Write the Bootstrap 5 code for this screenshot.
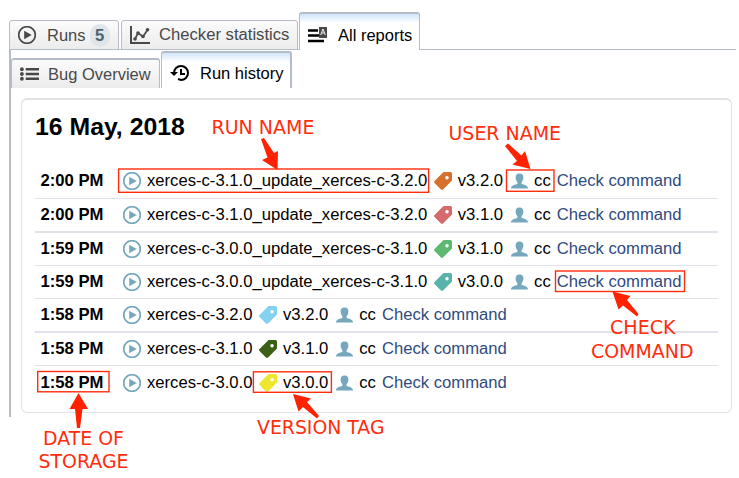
<!DOCTYPE html>
<html lang="en">
<head>
<meta charset="utf-8">
<meta name="viewport" content="width=device-width, initial-scale=1">
<title>Run history</title>
<link rel="stylesheet" href="https://cdn.jsdelivr.net/npm/bootstrap@5.3.0/dist/css/bootstrap.min.css">
<style>
body{font-family:"Liberation Sans",Arial,sans-serif;font-size:16.65px;line-height:20px;color:#000;background:#fff;width:739px;height:478px;overflow:hidden}
.shell{padding:12px 3px 0 9px}
.tabstrip{height:38px;flex-wrap:nowrap;white-space:nowrap;position:relative;border:0;font-size:16.5px}
.tabstrip.outer::before{content:"";position:absolute;left:0;right:0;bottom:0;height:1px;background:#b5bcc7}
.tabstrip .nav-link{position:relative;display:flex;align-items:center;padding:0;margin-bottom:0;color:#494949;border:1px solid #b5bcc7;border-radius:3px 3px 0 0;background:linear-gradient(#fbfbfb,#ececec)}
.tabstrip .nav-link.active{color:#000;border-color:#b5bcc7;border-top-width:2px;border-bottom:0;background:linear-gradient(#cfe5fa,#fff 9px)}
.outer .nav-link{height:30px}
.outer .nav-link.active{height:38px;padding-top:5px}
.inner .nav-link{height:30px;border-top-width:2px;border-bottom:0}
.inner .nav-link.active{height:37px;border-right-width:2px;padding-top:5px}
.tab-runs{width:110px}.tab-stats{width:177px;margin-left:2px}.tab-all{width:121px;margin-left:1px}
.tab-bugs{width:149px}.tab-history{width:131px;margin-left:1px}
.tabstrip svg{flex:none}
.tab-text{margin-left:10px}
.tab-bugs .tab-text{margin-left:9px}
.tab-stats .tab-text{margin-left:9px;font-size:16.65px}
.count{width:20px;height:23px;border-radius:10px;background:#dfe5e8;color:#4d6370;padding:0;font-size:16.65px;line-height:23px}
.pane{border-left:2px solid #b5bcc7;height:367px}
.panel{margin:10px 4px 0 10px;height:315px;border:1px solid #dfe2e7;border-top-width:2px;border-radius:6px;padding:12px 13px 0}
.day{font-size:24.8px;line-height:30px;font-weight:700;margin:0 0 22px}
.run{display:flex;align-items:center;height:33px;border-bottom:1px solid #dfe2e8;white-space:nowrap;padding-left:5.5px}
.run.tall{height:34px}
.run:first-child{height:35px;padding-bottom:1px}
.run.thick{border-bottom-width:2px}
.run:last-child{border:0}
.time{width:82.5px;font-weight:700}
.run a{color:#2f4b7e;text-decoration:none;margin-left:6px}
.ico{width:18px;height:18px;flex:none}
.play{color:#75a7bd;margin-right:6px}
.label-tag{margin:0 5.5px 0 7px}
.user{width:17px;color:#75a7bd;margin:0 6px 0 8px}
.notes{position:absolute;left:0;top:0;pointer-events:none}
.notes text{font-family:"DejaVu Sans",sans-serif;font-size:18.9px;fill:#ff2d0c}
</style>
</head>
<body>
<svg class="d-none">
<symbol id="play" viewBox="0 0 18 18"><circle cx="9" cy="9" r="8.3" fill="none" stroke="currentColor" stroke-width="1.7"/><path d="M6.2 4.8 13.7 9 6.2 13.2Z" fill="currentColor"/></symbol>
<symbol id="tag" viewBox="0 0 18 18"><path fill="currentColor" fill-rule="evenodd" d="M9.5 0H16.5Q18 0 18 1.5V8.5L9 17.5Q8 18.4 7 17.5L.5 11Q-.4 10 .5 9ZM13 4a1.7 1.7 0 1 0 .01 0Z"/></symbol>
<symbol id="user" viewBox="0 0 17 18"><path fill="currentColor" d="M8.5 1.5C11.5 1.5 12.6 3.5 12.4 6 12.2 8.2 11.3 9.3 10.6 10.2V12C12.5 12.8 17 13 17 16.5H0C0 13 4.5 12.8 6.4 12V10.2C5.7 9.3 4.8 8.2 4.6 6 4.4 3.5 5.5 1.5 8.5 1.5Z"/></symbol>
</svg>
<main class="shell">
<nav class="nav nav-tabs tabstrip outer align-items-end">
<a class="nav-link tab-runs"><svg class="ms-2" width="19" height="18"><use href="#play" width="18" height="18"/></svg><span class="tab-text">Runs</span><span class="badge count ms-1">5</span></a>
<a class="nav-link tab-stats"><svg class="ms-2" width="20" height="20" viewBox="0 0 20 20" fill="none" stroke="#494949" stroke-width="2"><path d="M1 1V18H20"/><path d="M5 14 8 8 13 11.5 17.5 5" stroke-width="1.7"/><g fill="#494949" stroke="none"><circle cx="5" cy="14" r="1.8"/><circle cx="8" cy="8" r="1.8"/><circle cx="13" cy="11.5" r="1.8"/><circle cx="17.5" cy="4.8" r="1.8"/></g></svg><span class="tab-text">Checker statistics</span></a>
<a class="nav-link active tab-all"><svg class="ms-2" width="20" height="18" viewBox="0 0 20 18"><path d="M0 4.5H10M0 9.5H11M0 15H16" stroke="#000" stroke-width="2.6"/><path d="M11 1h8v11h-8z" fill="#494949"/><path d="M12.7 9 15 3 17.3 9M13.5 7H16.5" stroke="#eee" fill="none"/></svg><span class="tab-text">All reports</span></a>
</nav>
<section class="pane">
<nav class="nav nav-tabs tabstrip inner align-items-end">
<a class="nav-link tab-bugs"><svg class="ms-2" width="19" height="16" viewBox="0 0 20 16"><path d="M6 3H20M6 8H20M6 13H20" stroke="#494949" stroke-width="2.6"/><g fill="#494949"><circle cx="2" cy="3" r="2"/><circle cx="2" cy="8" r="2"/><circle cx="2" cy="13" r="2"/></g></svg><span class="tab-text">Bug Overview</span></a>
<a class="nav-link active tab-history"><svg class="ms-2" width="20" height="18" viewBox="0 0 20 18"><path d="M4 9A7 7 0 1 1 11 16L8 15" fill="none" stroke="#000" stroke-width="2"/><path d="M0 8H8L4 12Z"/><path d="M11 5V10H15" fill="none" stroke="#000" stroke-width="2"/></svg><span class="tab-text">Run history</span></a>
</nav>
<div class="panel">
<h1 class="day">16 May, 2018</h1>
<div class="runs">
<div class="run"><span class="time">2:00 PM</span><svg class="ico play"><use href="#play"/></svg><span>xerces-c-3.1.0_update_xerces-c-3.2.0</span><svg class="ico label-tag" color="#d6702c"><use href="#tag"/></svg><span>v3.2.0</span><svg class="ico user"><use href="#user"/></svg><span>cc</span><a href="#">Check command</a></div>
<div class="run tall thick"><span class="time">2:00 PM</span><svg class="ico play"><use href="#play"/></svg><span>xerces-c-3.1.0_update_xerces-c-3.2.0</span><svg class="ico label-tag" color="#d66b6e"><use href="#tag"/></svg><span>v3.1.0</span><svg class="ico user"><use href="#user"/></svg><span>cc</span><a href="#">Check command</a></div>
<div class="run"><span class="time">1:59 PM</span><svg class="ico play"><use href="#play"/></svg><span>xerces-c-3.0.0_update_xerces-c-3.1.0</span><svg class="ico label-tag" color="#5cb96f"><use href="#tag"/></svg><span>v3.1.0</span><svg class="ico user"><use href="#user"/></svg><span>cc</span><a href="#">Check command</a></div>
<div class="run"><span class="time">1:59 PM</span><svg class="ico play"><use href="#play"/></svg><span>xerces-c-3.0.0_update_xerces-c-3.1.0</span><svg class="ico label-tag" color="#58b3aa"><use href="#tag"/></svg><span>v3.0.0</span><svg class="ico user"><use href="#user"/></svg><span>cc</span><a href="#">Check command</a></div>
<div class="run tall thick"><span class="time">1:58 PM</span><svg class="ico play"><use href="#play"/></svg><span>xerces-c-3.2.0</span><svg class="ico label-tag" color="#83d2f0"><use href="#tag"/></svg><span>v3.2.0</span><svg class="ico user"><use href="#user"/></svg><span>cc</span><a href="#">Check command</a></div>
<div class="run"><span class="time">1:58 PM</span><svg class="ico play"><use href="#play"/></svg><span>xerces-c-3.1.0</span><svg class="ico label-tag" color="#3b6015"><use href="#tag"/></svg><span>v3.1.0</span><svg class="ico user"><use href="#user"/></svg><span>cc</span><a href="#">Check command</a></div>
<div class="run"><span class="time">1:58 PM</span><svg class="ico play"><use href="#play"/></svg><span>xerces-c-3.0.0</span><svg class="ico label-tag" color="#efe72e"><use href="#tag"/></svg><span>v3.0.0</span><svg class="ico user"><use href="#user"/></svg><span>cc</span><a href="#">Check command</a></div>
</div>
</div>
</section>
</main>
<svg class="notes" width="739" height="478">
<g fill="none" stroke="#ff2d0c" stroke-width="1.4">
<rect x="118.6" y="169" width="310" height="23.3"/><rect x="506.5" y="170" width="47.5" height="21.3"/><rect x="555.5" y="271" width="129" height="20.5"/><rect x="37.7" y="371.5" width="71.3" height="20.3"/><rect x="253.4" y="371.8" width="78" height="20.5"/>
</g>
<g fill="#ff2200">
<path d="M261 139 264 138 274 153 278 151 277.5 170 262 160 267.5 157.5Z"/>
<path d="M505 146 508 143.5 521.5 155.5 525 151 530.5 169 512.5 164.5 517 161Z"/>
<path d="M612.5 291.5 630.5 296 627 300 638.5 314 637 316.5 623 305.5 618.5 309.5Z"/>
<path d="M78.5 393 88 409 82.5 409 80 428 77 428 75 409 69.5 409Z"/>
<path d="M293 394 311 398.5 307 402 319 416 317 418.5 303 407 298.5 411.5Z"/>
</g>
<text x="211.5" y="134" textLength="103" lengthAdjust="spacingAndGlyphs">RUN NAME</text>
<text x="448.5" y="140" textLength="112.5" lengthAdjust="spacingAndGlyphs">USER NAME</text>
<text x="610" y="334" textLength="65.5" lengthAdjust="spacingAndGlyphs">CHECK</text>
<text x="591" y="357.5" textLength="102.5" lengthAdjust="spacingAndGlyphs">COMMAND</text>
<text x="257" y="434" textLength="127.5" lengthAdjust="spacingAndGlyphs">VERSION TAG</text>
<text x="43" y="445" textLength="81" lengthAdjust="spacingAndGlyphs">DATE OF</text>
<text x="38.5" y="468" textLength="90" lengthAdjust="spacingAndGlyphs">STORAGE</text>
</svg>
<script src="https://cdn.jsdelivr.net/npm/bootstrap@5.3.0/dist/js/bootstrap.bundle.min.js"></script>
</body>
</html>
